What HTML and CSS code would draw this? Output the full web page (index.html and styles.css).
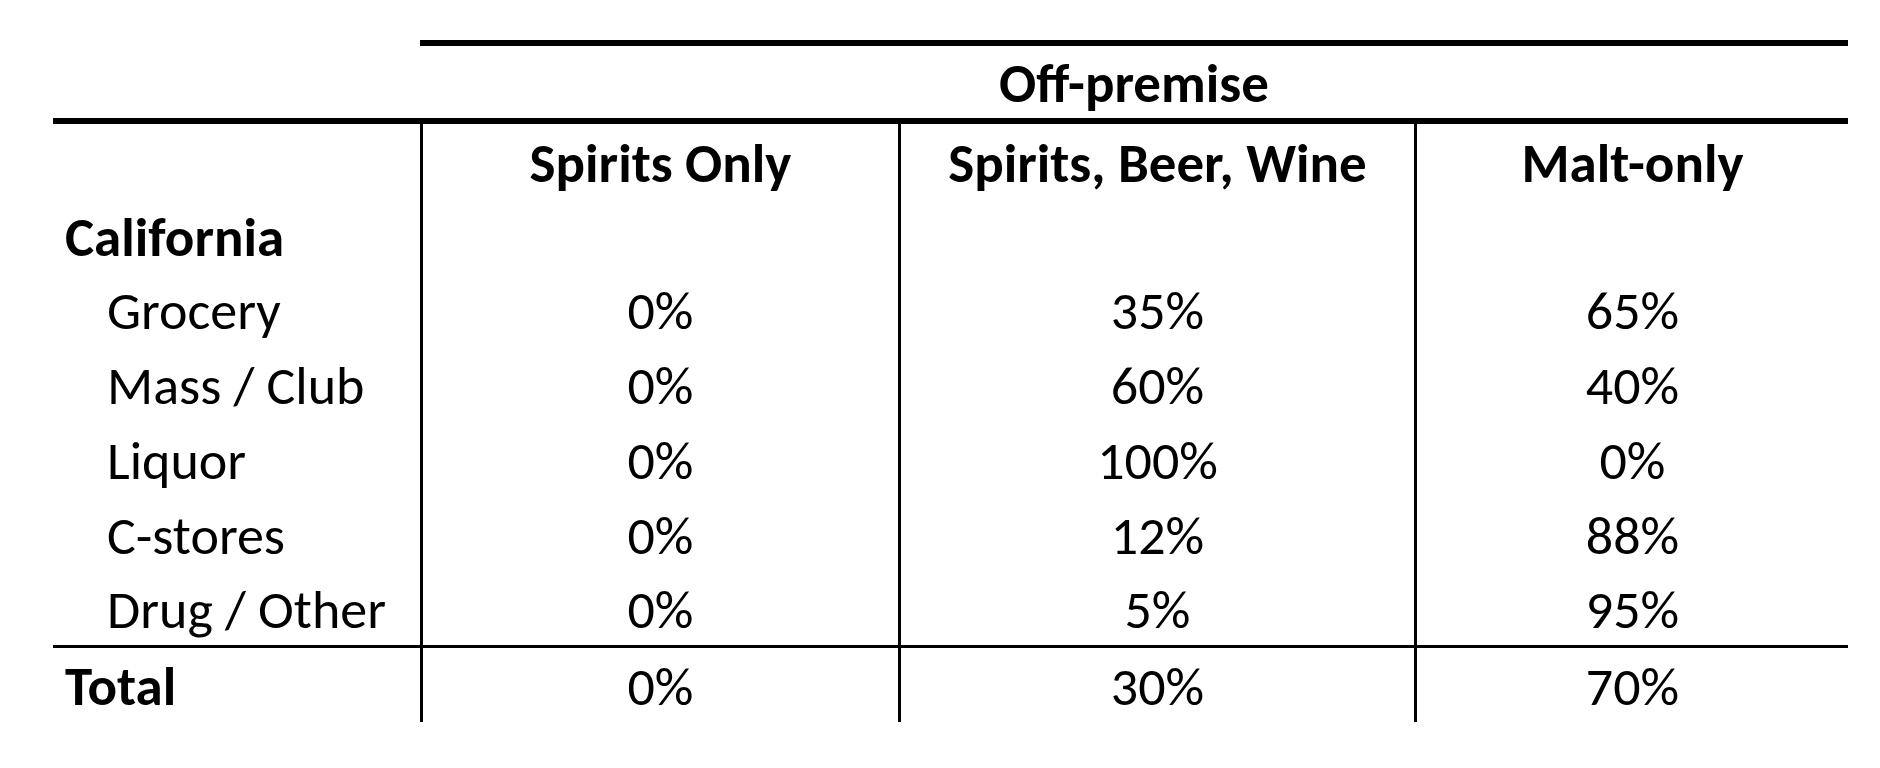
FILE: index.html
```html
<!DOCTYPE html>
<html lang="en">
<head>
<meta charset="utf-8">
<title>Off-premise</title>
<link rel="stylesheet" href="styles.css">
</head>
<body>
<div class="sheet">
  <div class="grid">
    <div class="cell r0"></div>
    <div class="cell r0 group bold">Off-premise</div>

    <div class="cell r1 lab"></div>
    <div class="cell r1 num bold vl">Spirits Only</div>
    <div class="cell r1 num bold vl">Spirits, Beer, Wine</div>
    <div class="cell r1 num bold vl">Malt-only</div>

    <div class="cell r2 lab bold">California</div>
    <div class="cell r2 vl"></div>
    <div class="cell r2 vl"></div>
    <div class="cell r2 vl"></div>

    <div class="cell rd lab sub">Grocery</div>
    <div class="cell rd num vl">0%</div>
    <div class="cell rd num vl">35%</div>
    <div class="cell rd num vl">65%</div>

    <div class="cell rd lab sub">Mass / Club</div>
    <div class="cell rd num vl">0%</div>
    <div class="cell rd num vl">60%</div>
    <div class="cell rd num vl">40%</div>

    <div class="cell rd lab sub">Liquor</div>
    <div class="cell rd num vl">0%</div>
    <div class="cell rd num vl">100%</div>
    <div class="cell rd num vl">0%</div>

    <div class="cell rd lab sub">C-stores</div>
    <div class="cell rd num vl">0%</div>
    <div class="cell rd num vl">12%</div>
    <div class="cell rd num vl">88%</div>

    <div class="cell rl lab sub">Drug / Other</div>
    <div class="cell rl num vl">0%</div>
    <div class="cell rl num vl">5%</div>
    <div class="cell rl num vl">95%</div>

    <div class="cell rt lab bold">Total</div>
    <div class="cell rt num vl">0%</div>
    <div class="cell rt num vl">30%</div>
    <div class="cell rt num vl">70%</div>
  </div>
</div>
</body>
</html>
```
FILE: styles.css
```css
html, body {
  margin: 0;
  padding: 0;
  background: #ffffff;
}

body {
  font-family: "Carlito", "Lato", "Liberation Sans", sans-serif;
  font-size: 54px;
  color: #000000;
}

.sheet {
  padding: 40px 0 0 53px;
}

.grid {
  display: grid;
  grid-template-columns: 367px 478px 516px 434px;
}

.cell {
  box-sizing: border-box;
  white-space: nowrap;
  padding-top: 2px;
}

.bold {
  font-weight: 700;
  font-size: 55px;
}

.num {
  text-align: center;
}

.lab {
  padding-left: 12px;
}

.lab.sub {
  padding-left: 54px;
}

.vl {
  border-left: 3px solid #000;
}

.r0 {
  height: 78px;
  line-height: 72px;
}

.group {
  grid-column: 2 / span 3;
  border-top: 6px solid #000;
  text-align: center;
}

.r1 {
  height: 81px;
  line-height: 75px;
  border-top: 6px solid #000;
}

.r2 {
  height: 73px;
  line-height: 73px;
}

.rd {
  height: 75px;
  line-height: 75px;
}

.rl {
  height: 73px;
  line-height: 73px;
}

.rt {
  height: 77px;
  line-height: 74px;
  border-top: 3px solid #000;
}
```
